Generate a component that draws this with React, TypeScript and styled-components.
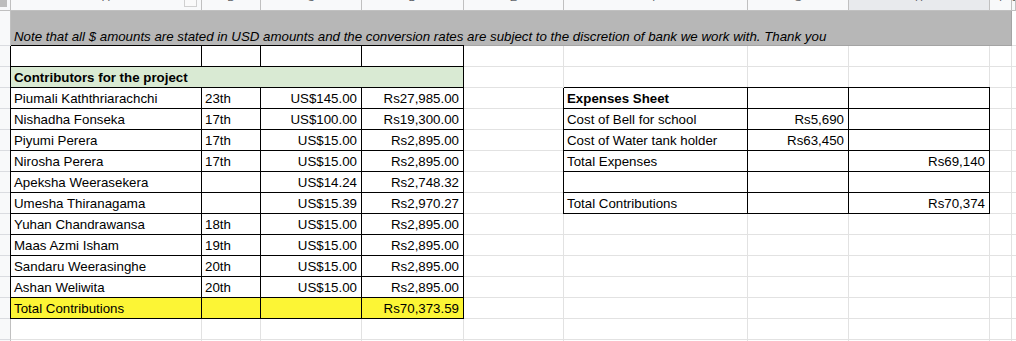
import React from 'react';
import styled, { createGlobalStyle, css } from 'styled-components';

const GlobalStyle = createGlobalStyle`
  html, body { margin: 0; padding: 0; background: #ffffff; }
  body { font-family: "Liberation Sans", Arial, sans-serif; overflow: hidden; }
`;

const COLS = '11px 191px 59px 101px 102px 100px 184px 101px 141px 22px 1fr';
const GRID = '#e2e2e2';
const HEAD_LINE = '#c0c0c0';
const GREEN = '#d9ead3';
const YELLOW = '#fcf535';
const BANNER = '#b7b7b7';

const Sheet = styled.div`
  width: 1016px;
  height: 341px;
  overflow: hidden;
  display: flex;
  flex-direction: column;
`;

const Row = styled.div<{ $h: number }>`
  display: grid;
  grid-template-columns: ${COLS};
  height: ${(p) => p.$h}px;
  flex: none;
`;

const Corner = styled.div`
  box-sizing: border-box;
  background: #f8f9fa;
  border-right: 1px solid ${HEAD_LINE};
  border-bottom: 1px solid ${HEAD_LINE};
  display: flex;
`;

const CornerBar = styled.div`
  width: 7px;
  height: 7px;
  background: #bdbdbd;
`;

const ColHead = styled.div<{ $sel?: boolean }>`
  box-sizing: border-box;
  position: relative;
  overflow: hidden;
  background: ${(p) => (p.$sel ? '#e8eaed' : '#f8f9fa')};
  border-right: 1px solid ${HEAD_LINE};
  border-bottom: 1px solid ${HEAD_LINE};
  text-align: center;
  font-size: 11px;
  line-height: 11px;
  color: #5f6368;
`;

const ColLetter = styled.span`
  display: block;
  margin-top: -8px;
`;

const FilterBox = styled.div`
  position: absolute;
  right: 4px;
  top: -1px;
  width: 11px;
  height: 6px;
  border: 1px solid #d0d0d0;
  background: #fafafa;
`;

const RowHead = styled.div`
  box-sizing: border-box;
  background: #f8f9fa;
  border-right: 1px solid ${HEAD_LINE};
  border-bottom: 1px solid #dadce0;
`;

const Cell = styled.div<{
  $span?: number;
  $bg?: string;
  $box?: boolean;
  $right?: boolean;
  $bold?: boolean;
  $italic?: boolean;
  $line?: string;
}>`
  box-sizing: border-box;
  grid-column: span ${(p) => p.$span ?? 1};
  background: ${(p) => p.$bg ?? '#ffffff'};
  border-right: 1px solid ${(p) => p.$line ?? GRID};
  border-bottom: 1px solid ${(p) => p.$line ?? GRID};
  display: flex;
  align-items: flex-end;
  justify-content: ${(p) => (p.$right ? 'flex-end' : 'flex-start')};
  padding: 0 4px ${(p) => (p.$italic ? 0 : 1)}px 3px;
  overflow: hidden;
  white-space: nowrap;
  font-size: 13.3px;
  line-height: 16px;
  color: #000000;
  font-weight: ${(p) => (p.$bold ? 700 : 400)};
  font-style: ${(p) => (p.$italic ? 'italic' : 'normal')};
  ${(p) =>
    p.$box &&
    css`
      border-right-color: #000000;
      border-bottom-color: #000000;
      box-shadow: -1px 0 0 #000000, 0 -1px 0 #000000;
    `}
`;

type C = {
  t?: string;
  right?: boolean;
  bold?: boolean;
  italic?: boolean;
  bg?: string;
  box?: boolean;
  span?: number;
  line?: string;
};

const e: C = {};
const bx = (t = '', right = false, extra: Partial<C> = {}): C => ({ t, right, box: true, ...extra });

const NOTE =
  'Note that all $ amounts are stated in USD amounts and the conversion rates are subject to the discretion of bank we work with. Thank you';

const people: [string, string, string, string][] = [
  ['Piumali Kaththriarachchi', '23th', 'US$145.00', 'Rs27,985.00'],
  ['Nishadha Fonseka', '17th', 'US$100.00', 'Rs19,300.00'],
  ['Piyumi Perera', '17th', 'US$15.00', 'Rs2,895.00'],
  ['Nirosha Perera', '17th', 'US$15.00', 'Rs2,895.00'],
  ['Apeksha Weerasekera', '', 'US$14.24', 'Rs2,748.32'],
  ['Umesha Thiranagama', '', 'US$15.39', 'Rs2,970.27'],
  ['Yuhan Chandrawansa', '18th', 'US$15.00', 'Rs2,895.00'],
  ['Maas Azmi Isham', '19th', 'US$15.00', 'Rs2,895.00'],
  ['Sandaru Weerasinghe', '20th', 'US$15.00', 'Rs2,895.00'],
  ['Ashan Weliwita', '20th', 'US$15.00', 'Rs2,895.00'],
];

const expenses: [string, string, string, boolean?][] = [
  ['Expenses Sheet', '', '', true],
  ['Cost of Bell for school', 'Rs5,690', ''],
  ['Cost of Water tank holder', 'Rs63,450', ''],
  ['Total Expenses', '', 'Rs69,140'],
  ['', '', ''],
  ['Total Contributions', '', 'Rs70,374'],
];

const rows: C[][] = [];
rows.push([{ t: NOTE, italic: true, bg: BANNER, span: 9, line: '#a4a4a4' }, e]);
rows.push([bx(), bx(), bx(), bx(), e, e, e, e, e, e]);
rows.push([{ t: 'Contributors for the project', bold: true, bg: GREEN, box: true, span: 4 }, e, e, e, e, e, e]);
people.forEach(([name, day, usd, rs], i) => {
  const ex = expenses[i];
  const tail: C[] = ex
    ? [e, bx(ex[0], false, { bold: !!ex[3] }), bx(ex[1], true), bx(ex[2], true), e, e]
    : [e, e, e, e, e, e];
  rows.push([bx(name), bx(day), bx(usd, true), bx(rs, true), ...tail]);
});
rows.push([
  bx('Total Contributions', false, { bg: YELLOW }),
  bx('', false, { bg: YELLOW }),
  bx('', false, { bg: YELLOW }),
  bx('Rs70,373.59', true, { bg: YELLOW }),
  e, e, e, e, e, e,
]);
rows.push([e, e, e, e, e, e, e, e, e, e]);
rows.push([e, e, e, e, e, e, e, e, e, e]);

const LETTERS = ['A', 'B', 'C', 'D', 'E', 'F', 'G', 'H', 'I', 'J'];

export default function App() {
  return (
    <>
      <GlobalStyle />
      <Sheet>
        <Row $h={11}>
          <Corner>
            <CornerBar />
          </Corner>
          {LETTERS.map((l) => (
            <ColHead key={l} $sel={l === 'H'}>
              <ColLetter>{l}</ColLetter>
              {l === 'A' && <FilterBox />}
            </ColHead>
          ))}
        </Row>
        {rows.map((cells, ri) => (
          <Row key={ri} $h={ri === 0 ? 35 : 21}>
            <RowHead />
            {cells.map((c, ci) => (
              <Cell
                key={ci}
                $span={c.span}
                $bg={c.bg}
                $box={c.box}
                $right={c.right}
                $bold={c.bold}
                $italic={c.italic}
                $line={c.line}
              >
                {c.t}
              </Cell>
            ))}
          </Row>
        ))}
      </Sheet>
    </>
  );
}
